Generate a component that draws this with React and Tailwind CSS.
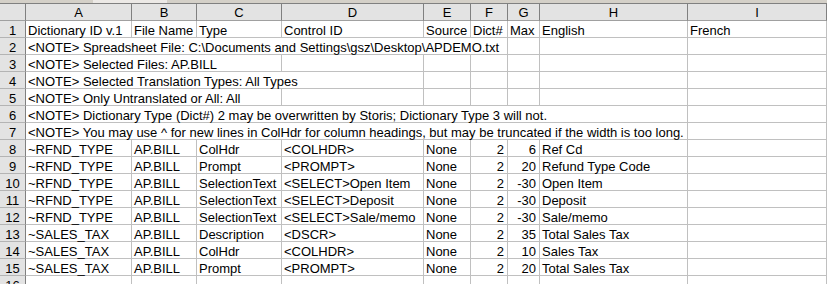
const COLS = ['A', 'B', 'C', 'D', 'E', 'F', 'G', 'H', 'I']

const SPAN = {
  3: 'col-span-3',
  4: 'col-span-4',
  6: 'col-span-6',
  8: 'col-span-8',
}

// each data row: [A, B, C, D, E, F, G, H]
const ROWS = [
  { cells: ['Dictionary ID v.1', 'File Name', 'Type', 'Control ID', 'Source', 'Dict#', 'Max', 'English', 'French'] },
  { note: '<NOTE> Spreadsheet File: C:\\Documents and Settings\\gsz\\Desktop\\APDEMO.txt', span: 6 },
  { note: '<NOTE> Selected Files: AP.BILL', span: 3 },
  { note: '<NOTE> Selected Translation Types: All Types', span: 4 },
  { note: '<NOTE> Only Untranslated or All: All', span: 3 },
  { note: '<NOTE> Dictionary Type (Dict#) 2 may be overwritten by Storis; Dictionary Type 3 will not.', span: 8 },
  { note: '<NOTE> You may use ^ for new lines in ColHdr for column headings, but may be truncated if the width is too long.', span: 8 },
  { data: ['~RFND_TYPE', 'AP.BILL', 'ColHdr', '<COLHDR>', 'None', '2', '6', 'Ref Cd'] },
  { data: ['~RFND_TYPE', 'AP.BILL', 'Prompt', '<PROMPT>', 'None', '2', '20', 'Refund Type Code'] },
  { data: ['~RFND_TYPE', 'AP.BILL', 'SelectionText', '<SELECT>Open Item', 'None', '2', '-30', 'Open Item'] },
  { data: ['~RFND_TYPE', 'AP.BILL', 'SelectionText', '<SELECT>Deposit', 'None', '2', '-30', 'Deposit'] },
  { data: ['~RFND_TYPE', 'AP.BILL', 'SelectionText', '<SELECT>Sale/memo', 'None', '2', '-30', 'Sale/memo'] },
  { data: ['~SALES_TAX', 'AP.BILL', 'Description', '<DSCR>', 'None', '2', '35', 'Total Sales Tax'] },
  { data: ['~SALES_TAX', 'AP.BILL', 'ColHdr', '<COLHDR>', 'None', '2', '10', 'Sales Tax'] },
  { data: ['~SALES_TAX', 'AP.BILL', 'Prompt', '<PROMPT>', 'None', '2', '20', 'Total Sales Tax'] },
  { cells: [] },
]

function RowNum({ n }) {
  return (
    <div className="h-[17px] pt-[1px] bg-[#e3e3e3] border-r border-b border-r-[#808080] border-b-[#b4b4b4] text-center leading-[17px] overflow-hidden">
      {n}
    </div>
  )
}

function Cell({ children, right, className = '' }) {
  return (
    <div
      className={`h-[17px] pt-[1px] bg-white border-r border-b border-[#c0c0c0] leading-[17px] whitespace-nowrap overflow-x-clip ${
        right ? 'text-right pr-[3px]' : 'pl-[2px]'
      } ${className}`}
    >
      {children}
    </div>
  )
}

export default function App() {
  return (
    <div className="w-[827px] h-[284px] overflow-hidden bg-white text-black text-[13px] font-['Liberation_Sans',Arial,sans-serif]">
      {/* strip above the sheet */}
      <div className="h-[3px] flex bg-[#d4d0c8]">
        <div className="w-[93px]" />
        <div className="w-[74px] bg-[#ece9e6]" />
      </div>

      <div className="grid grid-cols-[26px_106px_65px_85px_142px_47px_37px_32px_148px_139px]">
        {/* column headers */}
        <div className="h-[18px] bg-[#e3e3e3] border-t border-r border-b border-t-[#808080] border-r-[#808080] border-b-[#a0a0a0]" />
        {COLS.map((c) => (
          <div
            key={c}
            className="h-[18px] pt-[2px] bg-[#e3e3e3] border-t border-r border-b border-t-[#808080] border-r-[#808080] border-b-[#a0a0a0] text-center leading-[14px] overflow-hidden"
          >
            {c}
          </div>
        ))}

        {ROWS.map((row, i) => {
          const n = i + 1
          if (row.note) {
            const rest = 9 - row.span
            return [
              <RowNum key={`n${n}`} n={n} />,
              <Cell key={`a${n}`} className={SPAN[row.span]}>
                {row.note}
              </Cell>,
              ...Array.from({ length: rest }, (_, k) => <Cell key={`e${n}-${k}`} />),
            ]
          }
          if (row.data) {
            const d = row.data
            return [
              <RowNum key={`n${n}`} n={n} />,
              <Cell key={`0${n}`}>{d[0]}</Cell>,
              <Cell key={`1${n}`}>{d[1]}</Cell>,
              <Cell key={`2${n}`}>{d[2]}</Cell>,
              <Cell key={`3${n}`}>{d[3]}</Cell>,
              <Cell key={`4${n}`}>{d[4]}</Cell>,
              <Cell key={`5${n}`} right>{d[5]}</Cell>,
              <Cell key={`6${n}`} right>{d[6]}</Cell>,
              <Cell key={`7${n}`}>{d[7]}</Cell>,
              <Cell key={`8${n}`} />,
            ]
          }
          return [
            <RowNum key={`n${n}`} n={n} />,
            ...Array.from({ length: 9 }, (_, k) => <Cell key={`c${n}-${k}`}>{row.cells[k]}</Cell>),
          ]
        })}
      </div>
    </div>
  )
}
